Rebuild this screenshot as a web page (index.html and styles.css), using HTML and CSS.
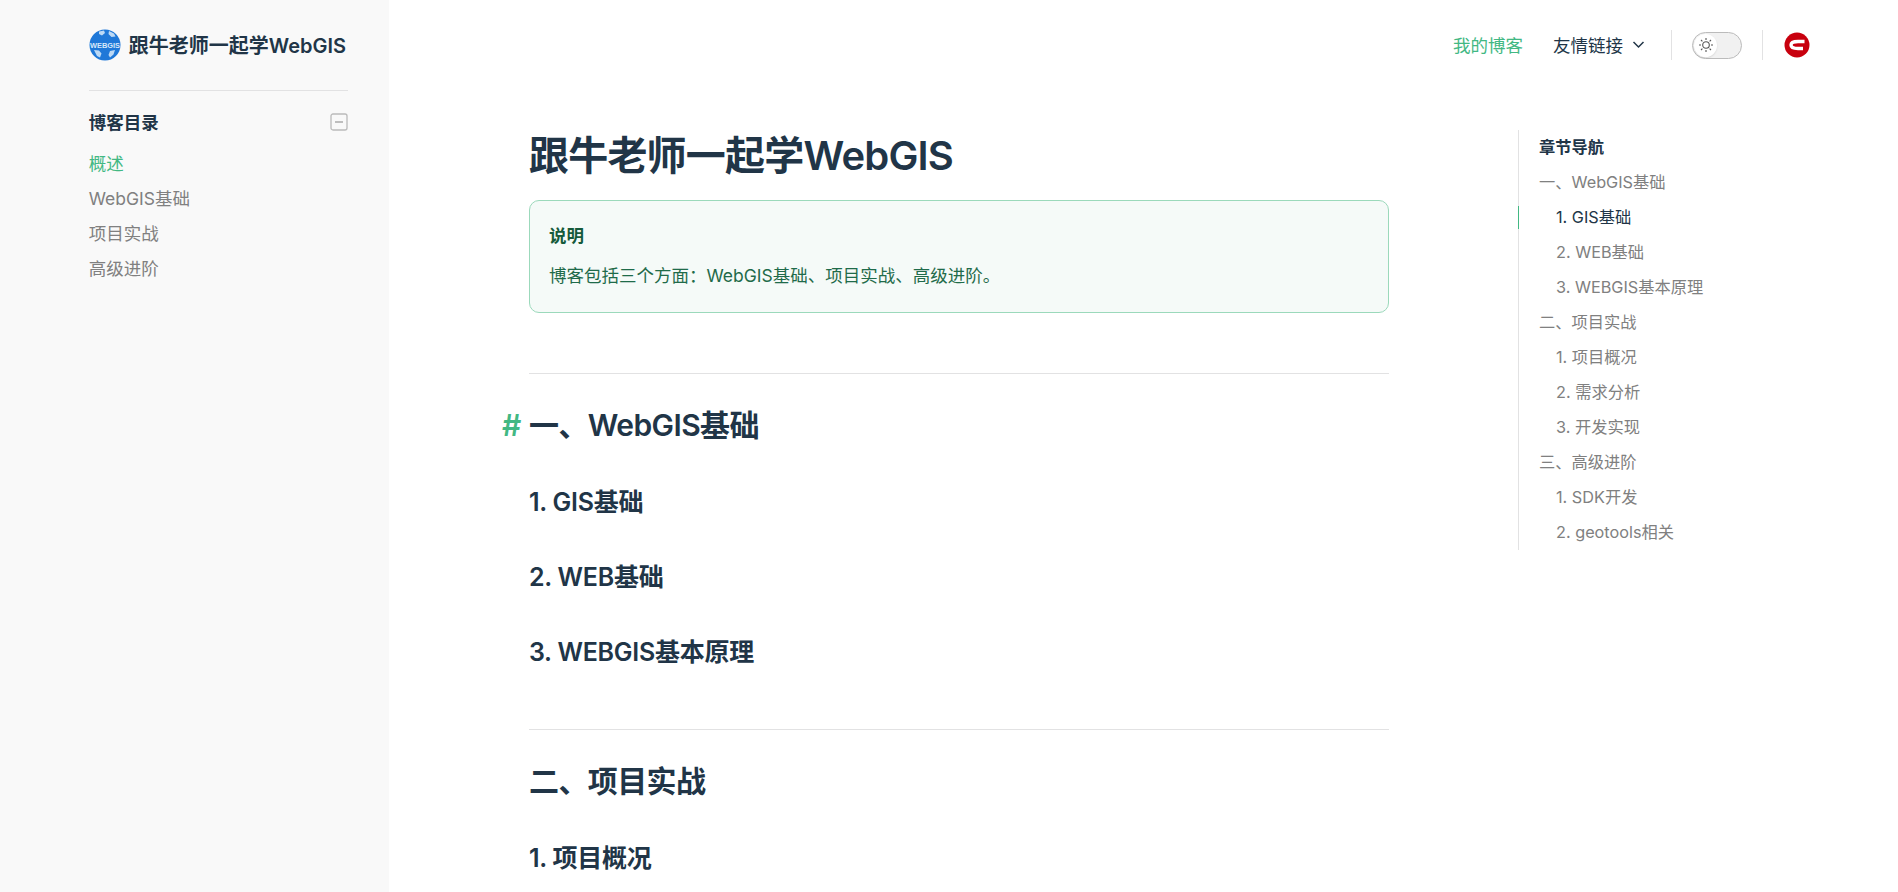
FILE: index.html
```html
<!DOCTYPE html>
<html lang="zh-CN">
<head>
    <meta charset="UTF-8">
    <meta name="viewport" content="width=device-width, initial-scale=1.0">
    <title>跟牛老师一起学WebGIS</title>
    <link rel="stylesheet" href="styles.css">
</head>
<body>
    <div class="layout">
        <aside class="sidebar">
            <a class="brand" href="#">
                <svg class="brand-logo" viewBox="0 0 32 32" aria-hidden="true">
                    <circle cx="16" cy="16" r="15.500" fill="#1f78d8"/>
                    <path d="M10 2.500 15 1.500l1 2.500-3 2.500-3-1.500zM20 2l5 2.500 1.500 3-4 .5-3-3zM5 21l5 .5 2.500 3-1.500 4-3-1.500zM21 22l5-1-1.500 4.500-3.500 3-1.500-2.500z" fill="#bcd9f5"/>
                    <text class="brand-logo-text" x="16" y="18.500" text-anchor="middle" textLength="30" lengthAdjust="spacingAndGlyphs">WEBGIS</text>
                </svg>
                <span>跟牛老师一起学WebGIS</span>
            </a>
            <div class="side-group">
                <div class="side-head">
                    <h2>博客目录</h2>
                    <svg class="side-toggle" viewBox="0 0 18 18" aria-hidden="true">
                        <rect x="1" y="1" width="16" height="16" rx="2" fill="none" stroke="#bbb" stroke-width="1.300"/>
                        <path d="M5 9h8" stroke="#aaa" stroke-width="1.500"/>
                    </svg>
                </div>
                <a class="side-link active" href="#">概述</a>
                <a class="side-link" href="#">WebGIS基础</a>
                <a class="side-link" href="#">项目实战</a>
                <a class="side-link" href="#">高级进阶</a>
            </div>
        </aside>

        <div class="right">
            <header class="topbar">
                <a class="nav-link active" href="#">我的博客</a>
                <a class="nav-link nav-menu" href="#">友情链接
                    <svg viewBox="0 0 12 12" aria-hidden="true"><path d="M2 4l4 4 4-4" fill="none" stroke="#213547" stroke-width="1.200"/></svg>
                </a>
                <span class="nav-sep"></span>
                <span class="switch">
                    <span class="switch-knob">
                        <svg viewBox="0 0 16 16" aria-hidden="true">
                            <circle cx="8" cy="8" r="3.300" fill="none" stroke="#555" stroke-width="1.100"/>
                            <path d="M8 1v2M8 13v2M1 8h2M13 8h2M3 3l1.400 1.400M11.600 11.600 13 13M3 13l1.400-1.400M11.600 4.400 13 3" stroke="#555" stroke-width="1.100"/>
                        </svg>
                    </span>
                </span>
                <span class="nav-sep"></span>
                <svg class="csdn" viewBox="0 0 26 26" aria-hidden="true">
                    <circle cx="13" cy="13" r="12.500" fill="#c8000e"/>
                    <path d="M20.500 9.500H14c-4.500 0-7 1.500-7 3.500s2.500 3.500 7 3.500h5" fill="none" stroke="#fff" stroke-width="3.400"/>
                </svg>
            </header>

            <div class="page">
                <main class="doc">
                    <h1>跟牛老师一起学WebGIS</h1>
                    <div class="tip">
                        <p class="tip-title">说明</p>
                        <p>博客包括三个方面：WebGIS基础、项目实战、高级进阶。</p>
                    </div>
                    <h2><span class="anchor">#</span>一、WebGIS基础</h2>
                    <h3>1. GIS基础</h3>
                    <h3>2. WEB基础</h3>
                    <h3>3. WEBGIS基本原理</h3>
                    <h2>二、项目实战</h2>
                    <h3>1. 项目概况</h3>
                </main>

                <nav class="toc">
                    <div class="toc-title">章节导航</div>
                    <a href="#">一、WebGIS基础</a>
                    <a class="sub current" href="#">1. GIS基础</a>
                    <a class="sub" href="#">2. WEB基础</a>
                    <a class="sub" href="#">3. WEBGIS基本原理</a>
                    <a href="#">二、项目实战</a>
                    <a class="sub" href="#">1. 项目概况</a>
                    <a class="sub" href="#">2. 需求分析</a>
                    <a class="sub" href="#">3. 开发实现</a>
                    <a href="#">三、高级进阶</a>
                    <a class="sub" href="#">1. SDK开发</a>
                    <a class="sub" href="#">2. geotools相关</a>
                </nav>
            </div>
        </div>
    </div>
</body>
</html>
```

FILE: styles.css
```css
* {
    box-sizing: border-box;
}

html, body {
    margin: 0;
    height: 100%;
    overflow: hidden;
}

body {
    font-family: Inter, "Noto Sans CJK SC", sans-serif;
    color: #213547;
    background-color: #fff;
}

a {
    color: inherit;
    text-decoration: none;
}

.layout {
    display: flex;
    height: 100%;
}

/* left column */
.sidebar {
    flex: 0 0 389px;
    padding: 0 41px 0 88.750px;
    background-color: #f9f9f9;
}

.brand {
    display: flex;
    align-items: center;
    gap: 8px;
    height: 91px;
    padding-bottom: 1px;
    border-bottom: 1px solid #e2e2e3;
    font-size: 20px;
    font-weight: 600;
    white-space: nowrap;
}

.brand-logo {
    width: 32px;
    height: 32px;
    flex: none;
}

.brand-logo-text {
    font-size: 7px;
    fill: #d8e8fa;
    font-family: "Liberation Sans", sans-serif;
}

.side-group {
    padding-top: 13px;
}

.side-head {
    display: flex;
    align-items: center;
    justify-content: space-between;
    height: 35px;
    margin-bottom: 7px;
}

.side-head h2 {
    margin: 0;
    font-size: 17.500px;
    font-weight: 700;
}

.side-toggle {
    width: 18px;
    height: 18px;
    margin-top: 1px;
}

.side-link {
    display: block;
    font-size: 17.500px;
    line-height: 35px;
    color: #808080;
}

.side-link.active {
    color: #42b883;
}

/* right column */
.right {
    flex: 1;
    min-width: 0;
}

.topbar {
    display: flex;
    align-items: center;
    justify-content: flex-end;
    height: 90px;
    padding-right: 88px;
    font-size: 17.500px;
}

.nav-link {
    padding-bottom: 2px;
}

.nav-link.active {
    color: #42b883;
}

.nav-menu {
    display: flex;
    align-items: center;
    gap: 8px;
    margin: 0 5px 0 30px;
}

.nav-menu svg {
    width: 15px;
    height: 15px;
}

.nav-sep {
    width: 1px;
    height: 30px;
    margin: 0 20px;
    background-color: #e2e2e3;
}

.switch {
    display: block;
    width: 50px;
    height: 27px;
    padding: 1px;
    border: 1px solid #bbb;
    border-radius: 14px;
    background-color: #f1f1f1;
}

.switch-knob {
    display: flex;
    align-items: center;
    justify-content: center;
    width: 23px;
    height: 23px;
    border-radius: 50%;
    background-color: #fff;
    box-shadow: 0 1px 2px rgba(0, 0, 0, 0.1);
}

.switch-knob svg {
    width: 16px;
    height: 16px;
}

.csdn {
    width: 26px;
    height: 26px;
    margin-left: 1px;
}

.page {
    display: flex;
    padding-left: 140px;
}

.doc {
    flex: 0 0 860px;
}

.doc h1 {
    margin: 41px 0 0;
    font-size: 40px;
    font-weight: 600;
    line-height: 50px;
    letter-spacing: -0.02em;
}

.tip {
    margin-top: 19px;
    padding: 19px 20px 20px 19px;
    border: 1px solid #9bd9bb;
    border-radius: 10px;
    background-color: #f5faf8;
    color: #1f6b4a;
    font-size: 17.500px;
}

.tip p {
    margin: 0;
    line-height: 32px;
}

.tip .tip-title {
    font-weight: 700;
    color: #155a3b;
    margin-bottom: 8px;
}

.doc h2 {
    position: relative;
    margin: 60px 0 0;
    padding-top: 30.500px;
    border-top: 1px solid #e2e2e3;
    font-size: 30px;
    font-weight: 600;
    line-height: 40px;
    letter-spacing: -0.02em;
}

.doc h3 + h2 {
    margin-top: 59.500px;
}

.anchor {
    position: absolute;
    left: -27px;
    color: #42b883;
}

.doc h3 {
    margin: 40px 0 0;
    font-size: 25px;
    font-weight: 600;
    line-height: 35px;
    letter-spacing: -0.01em;
}

.toc {
    flex: 0 0 auto;
    position: relative;
    align-self: flex-start;
    margin: 40px 0 0 129px;
    padding-left: 20px;
    border-left: 1px solid #e2e2e3;
    font-size: 16.250px;
    line-height: 35px;
    color: #808080;
}

.toc a {
    display: block;
    white-space: nowrap;
}

.toc-title {
    font-weight: 700;
    color: #213547;
}

.toc .sub {
    padding-left: 17px;
}

.toc .current {
    color: #213547;
}

.toc .current::before {
    content: "";
    position: absolute;
    left: -1px;
    width: 1px;
    height: 23px;
    margin-top: 6px;
    background-color: #42b883;
}
```
